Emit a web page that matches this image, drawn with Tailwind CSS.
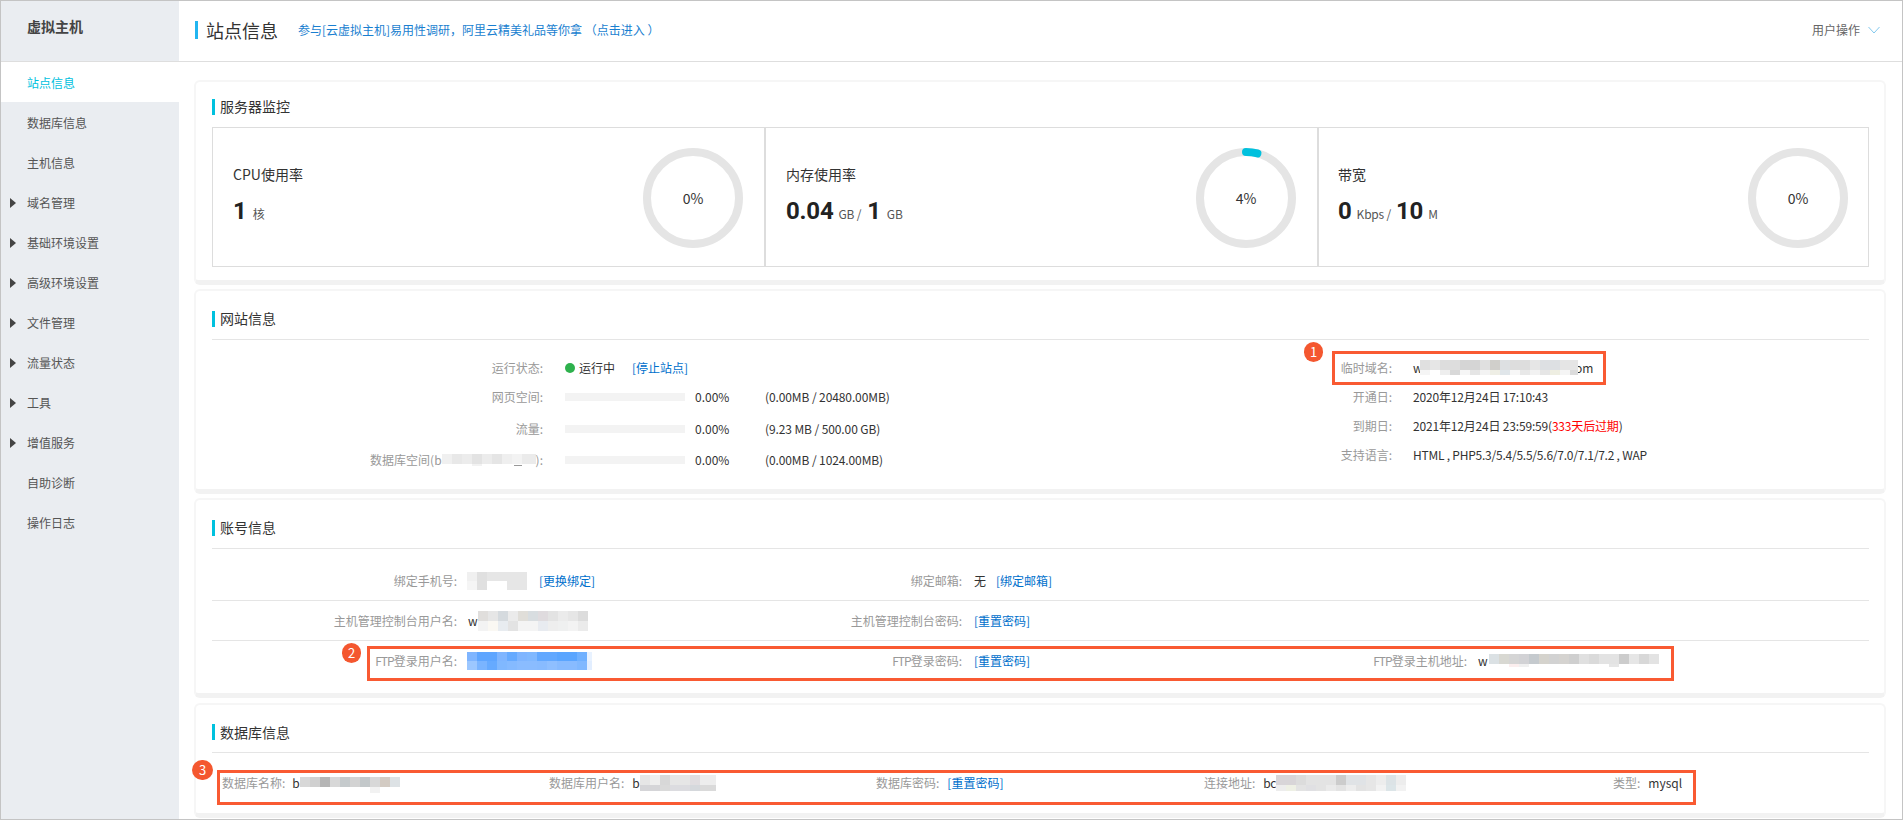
<!DOCTYPE html>
<html>
  <head>
    <meta charset="utf-8" />
    <title>站点信息</title>
    <script src="https://cdn.jsdelivr.net/npm/@tailwindcss/browser@4"></script>
  </head>
  <body class="bg-white">
    <div class="w-[1903px] h-[820px] overflow-hidden border border-[#c4c4c4] flex flex-col bg-white text-[12px] leading-5 text-[#333] font-['Noto_Sans_CJK_SC',sans-serif]">
      <!-- top bar -->
      <header class="h-[61px] shrink-0 flex border-b border-[#dedede]">
        <div class="w-[178px] bg-[#eaedf1] pl-[26px] pt-[15px] text-[14px] font-bold text-[#444]">虚拟主机</div>
        <div class="flex-1 flex items-center pl-[16px] pr-[22px] pb-[3px]">
          <span class="w-[3px] h-[18px] bg-[#22b5f0]"></span>
          <h1 class="ml-[8px] text-[18px] text-[#333]">站点信息</h1>
          <a class="ml-[20px] text-[#1a7fd0]">参与[云虚拟主机]易用性调研，阿里云精美礼品等你拿 （点击进入 ）</a>
          <span class="ml-auto text-[#666]">用户操作</span>
          <svg class="ml-[8px]" width="12" height="8" viewBox="0 0 12 8" fill="none" stroke="#82c8ee" stroke-width="1"><path d="M0.5 1l5.5 6 5.5-6" /></svg>
        </div>
      </header>

      <div class="flex-1 flex min-h-0">
        <!-- sidebar -->
        <nav class="w-[178px] shrink-0 bg-[#eaedf1] text-[#555] *:pt-[2px]">
          <a class="h-10 flex items-center pl-[26px] bg-white text-[#00c1de]">站点信息</a>
          <a class="h-10 flex items-center pl-[26px]">数据库信息</a>
          <a class="h-10 flex items-center pl-[26px]">主机信息</a>
          <a class="h-10 flex items-center pl-[9px]"><span class="w-0 h-0 mr-[11px] border-y-[5px] border-y-transparent border-l-[6px] border-l-[#444]"></span>域名管理</a>
          <a class="h-10 flex items-center pl-[9px]"><span class="w-0 h-0 mr-[11px] border-y-[5px] border-y-transparent border-l-[6px] border-l-[#444]"></span>基础环境设置</a>
          <a class="h-10 flex items-center pl-[9px]"><span class="w-0 h-0 mr-[11px] border-y-[5px] border-y-transparent border-l-[6px] border-l-[#444]"></span>高级环境设置</a>
          <a class="h-10 flex items-center pl-[9px]"><span class="w-0 h-0 mr-[11px] border-y-[5px] border-y-transparent border-l-[6px] border-l-[#444]"></span>文件管理</a>
          <a class="h-10 flex items-center pl-[9px]"><span class="w-0 h-0 mr-[11px] border-y-[5px] border-y-transparent border-l-[6px] border-l-[#444]"></span>流量状态</a>
          <a class="h-10 flex items-center pl-[9px]"><span class="w-0 h-0 mr-[11px] border-y-[5px] border-y-transparent border-l-[6px] border-l-[#444]"></span>工具</a>
          <a class="h-10 flex items-center pl-[9px]"><span class="w-0 h-0 mr-[11px] border-y-[5px] border-y-transparent border-l-[6px] border-l-[#444]"></span>增值服务</a>
          <a class="h-10 flex items-center pl-[26px]">自助诊断</a>
          <a class="h-10 flex items-center pl-[26px]">操作日志</a>
        </nav>

        <!-- content -->
        <main class="flex-1 pl-[15px] pt-[18px]">
          <!-- server monitor -->
          <section class="relative w-[1692px] h-[205px] pt-[17px] pl-[16px] pr-[15px] rounded-md border-2 border-[#f6f6f6] border-b-[5px] border-b-[#f2f2f2]">
            <h2 class="h-4 flex items-center pb-[2px] text-[14px] border-l-[3px] border-[#00c1de] pl-[5px]">服务器监控</h2>
            <div class="mt-3 h-[140px] border border-[#ddd] grid grid-cols-[551px_553px_1fr]">
              <div class="flex items-center justify-between pl-[20px] pr-[21px]">
                <div>
                  <div class="text-[14px]">CPU使用率</div>
                  <div class="mt-[17px] h-[30px] flex items-baseline text-[#555]"><b class="text-[24px] text-[#222] mr-[6px] font-['Roboto']">1</b>核</div>
                </div>
                <div class="relative mt-[2px] w-[100px] h-[100px]">
                  <svg width="100" height="100" viewBox="0 0 100 100" fill="none" stroke-width="8"><circle cx="50" cy="50" r="46" stroke="#e5e5e5" /></svg>
                  <span class="absolute inset-0 flex items-center justify-center text-[14px]">0%</span>
                </div>
              </div>
              <div class="flex items-center justify-between pl-[20px] pr-[21px] border-l-2 border-[#ddd]">
                <div>
                  <div class="text-[14px]">内存使用率</div>
                  <div class="mt-[17px] h-[30px] flex items-baseline text-[#555] tracking-[-0.2px]"><b class="text-[24px] text-[#222] mr-[5px] font-['Roboto']">0.04</b>GB /<b class="text-[24px] text-[#222] mx-[6px] font-['Roboto']">1</b>GB</div>
                </div>
                <div class="relative mt-[2px] w-[100px] h-[100px]">
                  <svg width="100" height="100" viewBox="0 0 100 100" fill="none" stroke-width="8"><circle cx="50" cy="50" r="46" stroke="#e5e5e5" /><circle cx="50" cy="50" r="46" stroke="#00c1de" stroke-linecap="round" stroke-dasharray="11.56 289" transform="rotate(-90 50 50)" /></svg>
                  <span class="absolute inset-0 flex items-center justify-center text-[14px]">4%</span>
                </div>
              </div>
              <div class="flex items-center justify-between pl-[19px] pr-[20px] border-l-2 border-[#ddd]">
                <div>
                  <div class="text-[14px]">带宽</div>
                  <div class="mt-[17px] h-[30px] flex items-baseline text-[#555] tracking-[-0.2px]"><b class="text-[24px] text-[#222] mr-[5px] font-['Roboto']">0</b>Kbps /<b class="text-[24px] text-[#222] mx-[5px] font-['Roboto']">10</b>M</div>
                </div>
                <div class="relative mt-[2px] w-[100px] h-[100px]">
                  <svg width="100" height="100" viewBox="0 0 100 100" fill="none" stroke-width="8"><circle cx="50" cy="50" r="46" stroke="#e5e5e5" /></svg>
                  <span class="absolute inset-0 flex items-center justify-center text-[14px]">0%</span>
                </div>
              </div>
            </div>
          </section>

          <!-- site info -->
          <section class="relative mt-[4px] w-[1692px] h-[205px] pt-[20px] pl-[16px] pr-[15px] rounded-md border-2 border-[#f6f6f6] border-b-[5px] border-b-[#f2f2f2]">
            <h2 class="h-4 flex items-center pb-[2px] text-[14px] border-l-[3px] border-[#00c1de] pl-[5px]">网站信息</h2>
            <div class="mt-3 border-t border-[#e5e5e5] pt-[18px] flex">
              <div class="w-[1040px]">
                <div class="h-5 flex items-center">
                  <span class="w-[331px] text-right text-[#999]">运行状态:</span>
                  <span class="ml-[22px] w-[10px] h-[10px] rounded-full bg-[#2eb14d]"></span>
                  <span class="ml-[4px]">运行中</span>
                  <a class="ml-[17px] text-[#0070cc]">[停止站点]</a>
                </div>
                <div class="mt-[9px] h-5 flex items-center">
                  <span class="w-[331px] text-right text-[#999]">网页空间:</span>
                  <span class="ml-[22px] w-[120px] h-2 bg-[#f3f3f3]"></span>
                  <span class="ml-[10px] w-[70px]">0.00%</span>
                  <span class="tracking-[-0.1px]">(0.00MB / 20480.00MB)</span>
                </div>
                <div class="mt-[12px] h-5 flex items-center">
                  <span class="w-[331px] text-right text-[#999]">流量:</span>
                  <span class="ml-[22px] w-[120px] h-2 bg-[#f3f3f3]"></span>
                  <span class="ml-[10px] w-[70px]">0.00%</span>
                  <span class="tracking-[-0.1px]">(9.23 MB / 500.00 GB)</span>
                </div>
                <div class="mt-[11px] h-5 flex items-center">
                  <span class="w-[331px] flex items-center justify-end text-[#999]">数据库空间(b<svg width="94" height="12" shape-rendering="crispEdges"><rect x="0" width="10" height="10" fill="#f0f0f0" /><rect x="10" width="10" height="10" fill="#e8e8e8" /><rect x="20" width="10" height="10" fill="#ececec" /><rect x="30" width="10" height="10" fill="#e3e3e3" /><rect x="40" width="10" height="10" fill="#ececec" /><rect x="50" width="10" height="10" fill="#e5e5e5" /><rect x="60" width="10" height="10" fill="#efefef" /><rect x="70" width="10" height="10" fill="#f3f3f3" /><rect x="80" width="14" height="10" fill="#ebebeb" /><rect x="30" y="10" width="10" height="2" fill="#f2f2f2" /><rect x="72" y="11" width="8" height="1" fill="#999" /></svg>):</span>
                  <span class="ml-[22px] w-[120px] h-2 bg-[#f3f3f3]"></span>
                  <span class="ml-[10px] w-[70px]">0.00%</span>
                  <span class="tracking-[-0.1px]">(0.00MB / 1024.00MB)</span>
                </div>
              </div>
              <div class="flex-1">
                <div class="h-5 flex items-center">
                  <span class="w-[140px] text-right text-[#999]">临时域名:</span>
                  <span class="ml-[21px] relative">w<span class="text-transparent">xxxxxxxxxxxxxxxxxxxxxxxxx</span><span class="ml-[3px]">om</span>
                    <svg class="absolute left-[7px] top-[2px]" width="158" height="15" shape-rendering="crispEdges">
                      <rect x="0" width="10" height="10" fill="#e0e0e0" /><rect x="10" width="10" height="10" fill="#e6e6e6" /><rect x="20" width="20" height="10" fill="#dddddd" /><rect x="40" width="20" height="10" fill="#d5d5d5" /><rect x="60" width="10" height="10" fill="#e0e0e0" /><rect x="70" width="10" height="10" fill="#d0cfcb" /><rect x="80" width="10" height="10" fill="#dde0e2" /><rect x="90" width="20" height="10" fill="#dddddd" /><rect x="110" width="10" height="10" fill="#e6e6e6" /><rect x="120" width="20" height="10" fill="#dde0e3" /><rect x="140" width="18" height="10" fill="#e5e5e5" />
                      <rect x="0" y="10" width="10" height="5" fill="#f5f5f5" /><rect x="20" y="10" width="10" height="5" fill="#eeeeee" /><rect x="30" y="10" width="10" height="5" fill="#d8d8d8" /><rect x="40" y="10" width="10" height="5" fill="#f6f6f6" /><rect x="50" y="10" width="10" height="5" fill="#e5e5e5" /><rect x="60" y="10" width="10" height="5" fill="#f3f3f3" /><rect x="70" y="10" width="10" height="5" fill="#eeeee5" /><rect x="80" y="10" width="10" height="5" fill="#e0e6ea" /><rect x="90" y="10" width="10" height="5" fill="#f7f7f7" /><rect x="100" y="10" width="10" height="5" fill="#e8e8e8" /><rect x="110" y="10" width="10" height="5" fill="#f2f2f2" /><rect x="120" y="10" width="10" height="5" fill="#e6e6e6" /><rect x="130" y="10" width="10" height="5" fill="#eeeee2" /><rect x="140" y="10" width="10" height="5" fill="#f5f5f5" /><rect x="150" y="10" width="8" height="5" fill="#dcdcdc" />
                    </svg>
                  </span>
                </div>
                <div class="mt-[9px] h-5 flex items-center">
                  <span class="w-[140px] text-right text-[#999]">开通日:</span>
                  <span class="ml-[21px] tracking-[-0.18px]">2020年12月24日 17:10:43</span>
                </div>
                <div class="mt-[9px] h-5 flex items-center">
                  <span class="w-[140px] text-right text-[#999]">到期日:</span>
                  <span class="ml-[21px] tracking-[-0.18px]">2021年12月24日 23:59:59(<span class="text-[#f00]">333天后过期</span>)</span>
                </div>
                <div class="mt-[9px] h-5 flex items-center">
                  <span class="w-[140px] text-right text-[#999]">支持语言:</span>
                  <span class="ml-[21px] tracking-[-0.23px]">HTML , PHP5.3/5.4/5.5/5.6/7.0/7.1/7.2 , WAP</span>
                </div>
              </div>
            </div>
            <div class="absolute left-[1136px] top-[60px] w-[274px] h-[34px] border-[3px] border-[#f95a32]"></div>
            <span class="absolute left-[1108px] top-[51px] w-[19px] h-[20px] rounded-full bg-[#f4572f] text-white flex items-center justify-center text-[13px]">1</span>
          </section>

          <!-- account info -->
          <section class="relative mt-[4px] w-[1692px] h-[200px] pt-[20px] pl-[16px] pr-[15px] rounded-md border-2 border-[#f6f6f6] border-b-[5px] border-b-[#f2f2f2]">
            <h2 class="h-4 flex items-center pb-[2px] text-[14px] border-l-[3px] border-[#00c1de] pl-[5px]">账号信息</h2>
            <div class="mt-3 border-t border-[#e5e5e5] pt-3">
              <div class="h-10 flex items-center pt-[1px] border-b border-[#e5e5e5]">
                <div class="w-[505px] flex items-center">
                  <span class="w-[245px] text-right text-[#999]">绑定手机号:</span>
                  <svg class="ml-[10px]" width="60" height="18" shape-rendering="crispEdges"><rect width="10" height="9" fill="#f0f0f0" /><rect x="10" width="10" height="18" fill="#e0e0e0" /><rect x="20" width="40" height="9" fill="#e6e6e6" /><rect y="9" width="10" height="9" fill="#f5f5f5" /><rect x="40" y="9" width="20" height="9" fill="#e6e6e6" /></svg>
                  <a class="ml-[12px] text-[#0070cc]">[更换绑定]</a>
                </div>
                <div class="w-[505px] flex items-center">
                  <span class="w-[245px] text-right text-[#999]">绑定邮箱:</span>
                  <span class="ml-[12px]">无</span>
                  <a class="ml-[10px] text-[#0070cc]">[绑定邮箱]</a>
                </div>
              </div>
              <div class="h-10 flex items-center border-b border-[#e5e5e5]">
                <div class="w-[505px] flex items-center">
                  <span class="w-[245px] text-right text-[#999]">主机管理控制台用户名:</span>
                  <span class="ml-[11px]">w</span>
                  <svg width="110" height="20" shape-rendering="crispEdges">
                    <rect x="0" width="10" height="10" fill="#e0dedc" /><rect x="10" width="10" height="10" fill="#e6e6e6" /><rect x="20" width="10" height="10" fill="#d5dade" /><rect x="30" width="10" height="10" fill="#ebebeb" /><rect x="40" width="10" height="10" fill="#e0ded9" /><rect x="50" width="10" height="10" fill="#d8dde0" /><rect x="60" width="10" height="10" fill="#dfdbde" /><rect x="70" width="10" height="10" fill="#e3e3e3" /><rect x="80" width="10" height="10" fill="#ebebeb" /><rect x="90" width="10" height="10" fill="#e6e6e6" /><rect x="100" width="10" height="10" fill="#dcdcdc" />
                    <rect x="0" y="10" width="10" height="10" fill="#f3f3f3" /><rect x="10" y="10" width="10" height="10" fill="#faf8f3" /><rect x="20" y="10" width="10" height="10" fill="#e8ecf0" /><rect x="30" y="10" width="10" height="10" fill="#e3e3e3" /><rect x="40" y="10" width="20" height="10" fill="#f4f4f4" /><rect x="60" y="10" width="10" height="10" fill="#e8ebf0" /><rect x="70" y="10" width="10" height="10" fill="#eeeeee" /><rect x="80" y="10" width="10" height="10" fill="#eff0f0" /><rect x="90" y="10" width="10" height="10" fill="#f3f3f3" /><rect x="100" y="10" width="10" height="10" fill="#ebebeb" />
                  </svg>
                </div>
                <div class="w-[505px] flex items-center">
                  <span class="w-[245px] text-right text-[#999]">主机管理控制台密码:</span>
                  <a class="ml-[12px] text-[#0070cc]">[重置密码]</a>
                </div>
              </div>
              <div class="h-10 flex items-center">
                <div class="w-[505px] flex items-center">
                  <span class="w-[245px] text-right text-[#999]"><span class="tracking-[-1px]">FTP</span>登录用户名:</span>
                  <svg class="ml-[10px]" width="125" height="18" shape-rendering="crispEdges">
                    <rect x="0" width="10" height="9" fill="#7fb5ff" /><rect x="10" width="20" height="9" fill="#5ea5ff" /><rect x="30" width="10" height="9" fill="#7fb5ff" /><rect x="40" width="10" height="9" fill="#66aaff" /><rect x="50" width="10" height="9" fill="#7fb5ff" /><rect x="60" width="10" height="9" fill="#80b8ff" /><rect x="70" width="20" height="9" fill="#62a8ff" /><rect x="90" width="20" height="9" fill="#5aa5ff" /><rect x="110" width="10" height="9" fill="#6fb0ff" /><rect x="120" width="5" height="9" fill="#e8f2ff" />
                    <rect x="0" y="9" width="10" height="9" fill="#9cc7ff" /><rect x="10" y="9" width="10" height="9" fill="#7ab4ff" /><rect x="20" y="9" width="10" height="9" fill="#66aaff" /><rect x="30" y="9" width="10" height="9" fill="#80b8ff" /><rect x="40" y="9" width="10" height="9" fill="#85baff" /><rect x="50" y="9" width="20" height="9" fill="#8abcff" /><rect x="70" y="9" width="10" height="9" fill="#88bbff" /><rect x="80" y="9" width="10" height="9" fill="#8fbfff" /><rect x="90" y="9" width="20" height="9" fill="#88bbff" /><rect x="110" y="9" width="10" height="9" fill="#80b8ff" /><rect x="120" y="9" width="5" height="9" fill="#e2eeff" />
                  </svg>
                </div>
                <div class="w-[505px] flex items-center">
                  <span class="w-[245px] text-right text-[#999]"><span class="tracking-[-1px]">FTP</span>登录密码:</span>
                  <a class="ml-[12px] text-[#0070cc]">[重置密码]</a>
                </div>
                <div class="flex items-center">
                  <span class="w-[245px] text-right text-[#999]"><span class="tracking-[-1px]">FTP</span>登录主机地址:</span>
                  <span class="ml-[11px]">w</span>
                  <svg class="ml-[1px]" width="170" height="14" shape-rendering="crispEdges">
                    <rect x="0" width="10" height="10" fill="#dbe1e4" /><rect x="10" width="10" height="10" fill="#d8d8d2" /><rect x="20" width="10" height="10" fill="#d5d5d5" /><rect x="30" width="10" height="10" fill="#d2d2d5" /><rect x="40" width="10" height="10" fill="#c5cace" /><rect x="50" width="10" height="10" fill="#d5d3cd" /><rect x="60" width="10" height="10" fill="#d2d2d2" /><rect x="70" width="10" height="10" fill="#d5d3d0" /><rect x="80" width="10" height="10" fill="#cfcfcf" /><rect x="90" width="10" height="10" fill="#e0e0e0" /><rect x="100" width="10" height="10" fill="#dadada" /><rect x="110" width="20" height="10" fill="#e3e3e3" /><rect x="130" width="10" height="10" fill="#cccccc" /><rect x="140" width="10" height="10" fill="#e6e6e6" /><rect x="150" width="10" height="10" fill="#d8d8d8" /><rect x="160" width="10" height="10" fill="#e3e3e3" />
                    <rect x="20" y="10" width="10" height="3" fill="#fbeeee" /><rect x="30" y="10" width="10" height="3" fill="#f0f0f0" /><rect x="120" y="10" width="10" height="3" fill="#e6e6e6" />
                  </svg>
                </div>
              </div>
            </div>
            <div class="absolute left-[171px] top-[146px] w-[1307px] h-[35px] border-[3px] border-[#f95a32]"></div>
            <span class="absolute left-[146px] top-[143px] w-[19px] h-[20px] rounded-full bg-[#f4572f] text-white flex items-center justify-center text-[13px]">2</span>
          </section>

          <!-- database info -->
          <section class="relative mt-[5px] w-[1692px] h-[115px] pt-[19px] pl-[16px] pr-[15px] rounded-md border-2 border-[#f6f6f6] border-b-[5px] border-b-[#f2f2f2]">
            <h2 class="h-4 flex items-center text-[14px] border-l-[3px] border-[#00c1de] pl-[5px]">数据库信息</h2>
            <div class="mt-3 border-t border-[#e5e5e5] pt-5 pl-[10px] h-5 box-content flex items-center">
              <div class="w-[327px] flex items-center">
                <span class="text-[#999]">数据库名称:</span>
                <span class="ml-[7px]">b</span>
                <svg class="mt-[4px]" width="100" height="16" shape-rendering="crispEdges"><rect x="0" width="10" height="10" fill="#d8d8d8" /><rect x="10" width="10" height="10" fill="#d0d0d0" /><rect x="20" width="10" height="10" fill="#b5b5b5" /><rect x="30" width="10" height="10" fill="#d8d8d8" /><rect x="40" width="10" height="10" fill="#c5cacc" /><rect x="50" width="10" height="10" fill="#d3d3d3" /><rect x="60" width="10" height="10" fill="#c3c8ca" /><rect x="70" width="10" height="10" fill="#d8d8d8" /><rect x="80" width="10" height="10" fill="#d3cbc3" /><rect x="90" width="10" height="10" fill="#dde2e5" /><rect x="70" y="10" width="10" height="6" fill="#f2f2f2" /></svg>
              </div>
              <div class="w-[327px] flex items-center">
                <span class="text-[#999]">数据库用户名:</span>
                <span class="ml-[8px]">b</span>
                <svg width="76" height="16" shape-rendering="crispEdges"><rect x="0" width="10" height="10" fill="#e6e6e6" /><rect x="10" width="10" height="10" fill="#eeeeee" /><rect x="20" width="10" height="10" fill="#d8d8d8" /><rect x="30" width="20" height="10" fill="#e6e6e6" /><rect x="50" width="10" height="10" fill="#e0dde0" /><rect x="60" width="16" height="10" fill="#ededed" /><rect x="0" y="10" width="20" height="6" fill="#d5d5d8" /><rect x="20" y="10" width="10" height="6" fill="#dadada" /><rect x="30" y="10" width="20" height="6" fill="#dcdce0" /><rect x="50" y="10" width="10" height="6" fill="#d5d8dc" /><rect x="60" y="10" width="16" height="6" fill="#dadada" /></svg>
              </div>
              <div class="w-[328px] flex items-center">
                <span class="text-[#999]">数据库密码:</span>
                <a class="ml-[8px] text-[#0070cc]">[重置密码]</a>
              </div>
              <div class="w-[409px] flex items-center">
                <span class="text-[#999]">连接地址:</span>
                <span class="ml-[8px] tracking-[-0.5px]">bc</span>
                <svg width="130" height="16" shape-rendering="crispEdges"><rect x="0" width="20" height="10" fill="#d8d5d8" /><rect x="20" width="10" height="10" fill="#dcdcdc" /><rect x="30" width="30" height="10" fill="#e3e3e3" /><rect x="60" width="10" height="10" fill="#cccccc" /><rect x="70" width="20" height="10" fill="#e0e3e6" /><rect x="90" width="10" height="10" fill="#e6e6e6" /><rect x="100" width="10" height="10" fill="#ededed" /><rect x="110" width="10" height="10" fill="#dce3e6" /><rect x="120" width="10" height="10" fill="#ededed" /><rect y="10" width="10" height="6" fill="#ededed" /><rect x="10" y="10" width="10" height="6" fill="#eef0e5" /><rect x="20" y="10" width="10" height="6" fill="#e3e3e3" /><rect x="30" y="10" width="10" height="6" fill="#e0e0e3" /><rect x="40" y="10" width="10" height="6" fill="#e3e3e3" /><rect x="50" y="10" width="10" height="6" fill="#eaeaea" /><rect x="60" y="10" width="10" height="6" fill="#e3e3e3" /><rect x="70" y="10" width="10" height="6" fill="#ededed" /><rect x="80" y="10" width="10" height="6" fill="#e3e3e3" /><rect x="90" y="10" width="10" height="6" fill="#e6e6e6" /><rect x="100" y="10" width="10" height="6" fill="#f2f2f2" /><rect x="110" y="10" width="10" height="6" fill="#dce5e8" /><rect x="120" y="10" width="10" height="6" fill="#f2f2f2" /></svg>
              </div>
              <div class="flex items-center">
                <span class="text-[#999]">类型:</span>
                <span class="ml-[8px]">mysql</span>
              </div>
            </div>
            <div class="absolute left-[21px] top-[65px] w-[1479px] h-[35px] border-[3px] border-[#f95a32]"></div>
            <span class="absolute left-[-4px] top-[55px] w-[21px] h-[20px] rounded-full bg-[#f4572f] text-white flex items-center justify-center text-[13px]">3</span>
          </section>
        </main>
      </div>
    </div>
  </body>
</html>
